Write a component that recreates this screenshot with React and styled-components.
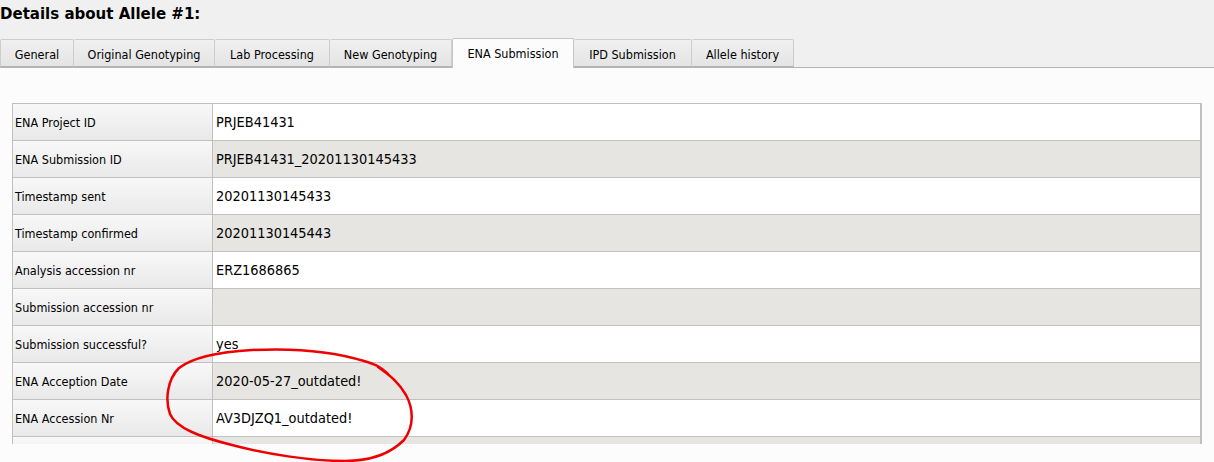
import React from "react";
import styled, { createGlobalStyle } from "styled-components";

const GlobalStyle = createGlobalStyle`
  html, body { margin: 0; padding: 0; }
  body {
    background: #f0f0f0;
    font-family: "DejaVu Sans", "Liberation Sans", sans-serif;
    font-stretch: condensed;
    color: #000;
  }
`;

const Page = styled.div`
  width: 1214px;
  height: 462px;
  display: flex;
  flex-direction: column;
  overflow: hidden;
  position: relative;
`;

const Heading = styled.h1`
  margin: 0;
  height: 37px;
  padding: 3px 0 0 0;
  box-sizing: border-box;
  font-size: 16.7px;
  font-weight: bold;
  line-height: 21px;
`;

const TabBar = styled.div`
  display: flex;
  align-items: flex-end;
  height: 30px;
  border-bottom: 1px solid #b4b4b4;
`;

const Tab = styled.div`
  box-sizing: border-box;
  width: ${(p) => p.$w}px;
  height: ${(p) => (p.$active ? 30 : 28)}px;
  margin-bottom: ${(p) => (p.$active ? -1 : 0)}px;
  display: flex;
  align-items: center;
  justify-content: center;
  padding-top: ${(p) => (p.$active ? 0 : 2)}px;
  font-size: 12.5px;
  border: 1px solid ${(p) => (p.$active ? "#c6c6c6" : "#cdcdcd")};
  border-left-width: ${(p) => (p.$first || p.$active ? 1 : 0)}px;
  border-bottom: ${(p) => (p.$active ? "none" : "1px solid #b4b4b4")};
  border-radius: 2px 2px 0 0;
  background: ${(p) =>
    p.$active ? "#fcfcfc" : "linear-gradient(#f0f0f0, #e4e4e4)"};
  position: relative;
  z-index: ${(p) => (p.$active ? 1 : 0)};
`;

const Content = styled.div`
  flex: 1;
  background: #fcfcfc;
  padding: 35px 12px 0 12px;
`;

const TableClip = styled.div`
  width: 1190px;
  height: 341px;
  overflow: hidden;
`;

const Table = styled.div`
  display: grid;
  grid-template-columns: 200px 1fr;
  border-top: 1px solid #c0c0c0;
  border-left: 1px solid #c0c0c0;
  border-right: 2px solid #c0c0c0;
`;

const Label = styled.div`
  height: 37px;
  display: flex;
  align-items: center;
  padding-left: 2px;
  padding-top: 1px;
  box-sizing: border-box;
  font-size: 12.5px;
  background: linear-gradient(#f8f8f8, #e9e9e9);
  border-bottom: 1px solid #c0c0c0;
  border-right: 1px solid #c0c0c0;
`;

const Value = styled.div`
  height: 37px;
  display: flex;
  align-items: center;
  padding-left: 3px;
  padding-bottom: 1px;
  box-sizing: border-box;
  font-size: 14.4px;
  background: ${(p) => (p.$alt ? "#e6e5e2" : "#ffffff")};
  border-bottom: 1px solid #c0c0c0;
`;

const Scribble = styled.svg`
  position: absolute;
  left: 0;
  top: 0;
  pointer-events: none;
`;

const tabs = [
  ["General", 74],
  ["Original Genotyping", 141],
  ["Lab Processing", 115],
  ["New Genotyping", 122],
  ["ENA Submission", 122, true],
  ["IPD Submission", 118],
  ["Allele history", 102],
];

const rows = [
  ["ENA Project ID", "PRJEB41431"],
  ["ENA Submission ID", "PRJEB41431_20201130145433"],
  ["Timestamp sent", "20201130145433"],
  ["Timestamp confirmed", "20201130145443"],
  ["Analysis accession nr", "ERZ1686865"],
  ["Submission accession nr", ""],
  ["Submission successful?", "yes"],
  ["ENA Acception Date", "2020-05-27_outdated!"],
  ["ENA Accession Nr", "AV3DJZQ1_outdated!"],
  ["", ""],
];

export default function App() {
  return (
    <>
      <GlobalStyle />
      <Page>
        <Heading>Details about Allele #1:</Heading>
        <TabBar>
          {tabs.map(([t, w, a], i) => (
            <Tab key={t} $w={w} $active={a} $first={i === 0}>
              {t}
            </Tab>
          ))}
        </TabBar>
        <Content>
          <TableClip>
            <Table>
              {rows.map(([l, v], i) => (
                <React.Fragment key={i}>
                  <Label>{l}</Label>
                  <Value $alt={i % 2 === 1}>{v}</Value>
                </React.Fragment>
              ))}
            </Table>
          </TableClip>
        </Content>
        <Scribble width="1214" height="462" viewBox="0 0 1214 462">
          <path
            d="M388 374 C380 366 374 364 364 361 C332 351 292 348 252 350 C216 352 192 358 179 368 C167 380 165 400 170 414 C176 428 200 437 232 445 C266 454 310 461 345 461 C372 461 392 452 404 440 C415 425 413 408 406 395 C399 383 391 376 378 367"
            fill="none"
            stroke="#ee0000"
            strokeWidth="2.5"
            strokeLinecap="round"
          />
        </Scribble>
      </Page>
    </>
  );
}
